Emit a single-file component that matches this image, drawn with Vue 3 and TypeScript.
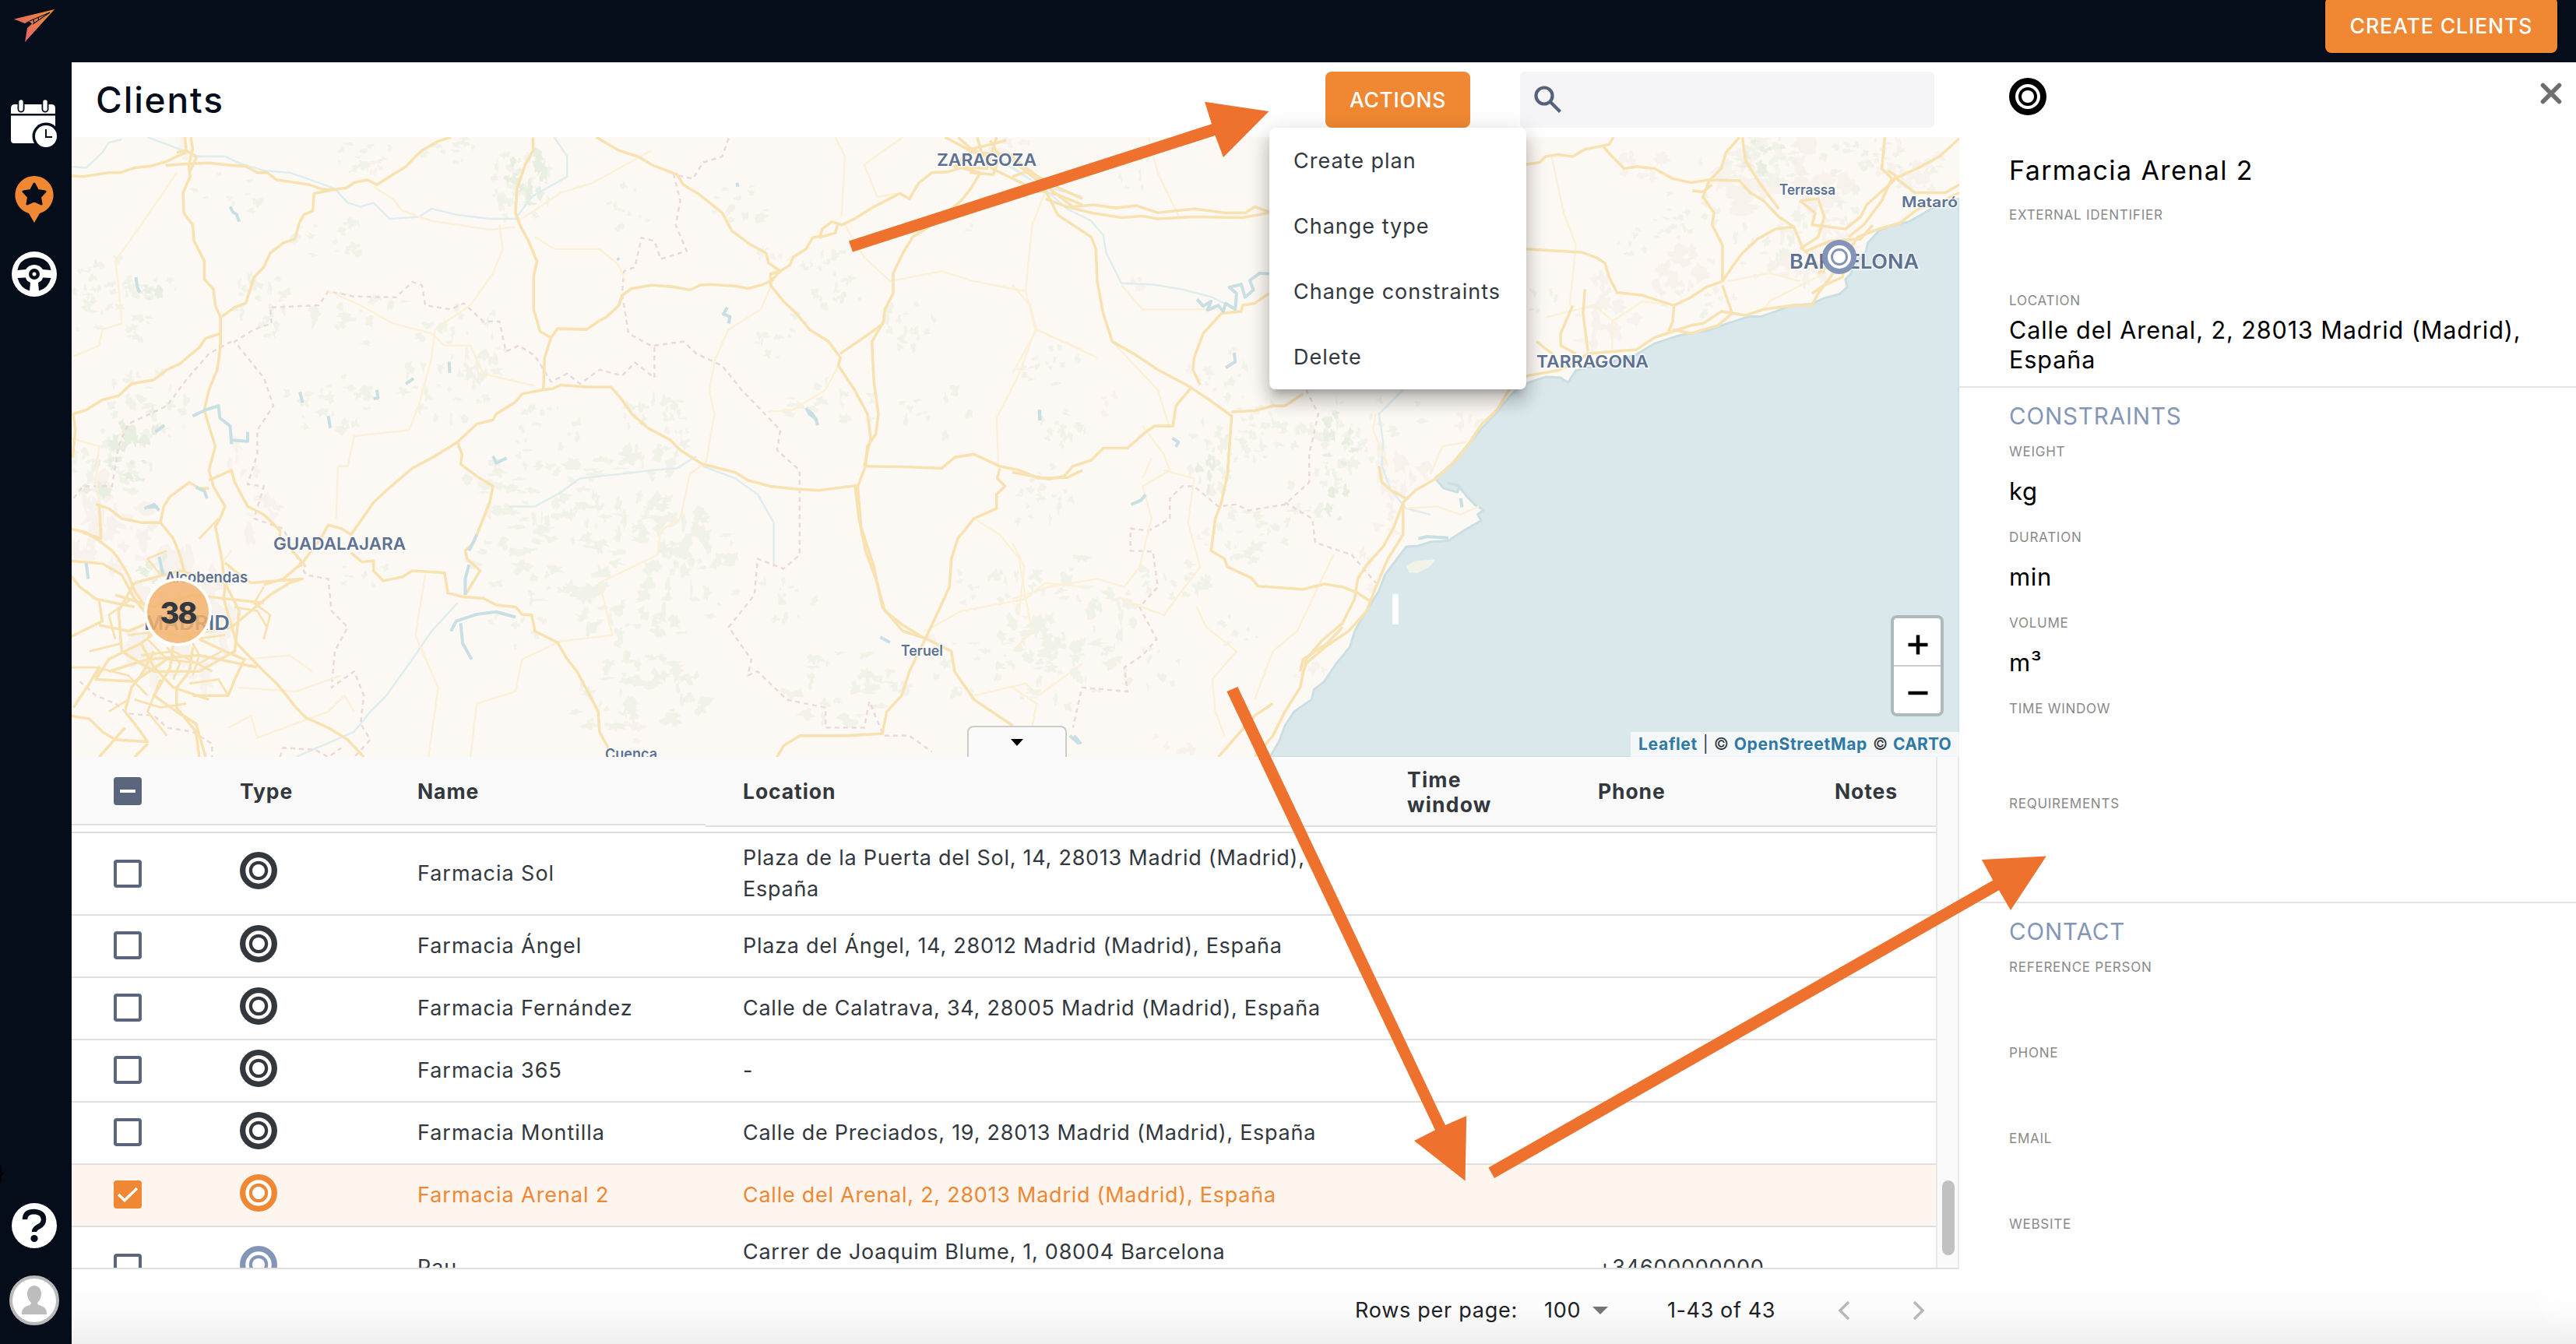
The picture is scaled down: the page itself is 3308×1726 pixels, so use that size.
<script setup lang="ts">
interface Client {
  name: string
  location: string
  phone?: string
  color: string
  selected?: boolean
  tall?: boolean
}

const clients: Client[] = [
  { name: 'Farmacia Sol', location: 'Plaza de la Puerta del Sol, 14, 28013 Madrid (Madrid), España', color: '#33383f', tall: true },
  { name: 'Farmacia Ángel', location: 'Plaza del Ángel, 14, 28012 Madrid (Madrid), España', color: '#33383f' },
  { name: 'Farmacia Fernández', location: 'Calle de Calatrava, 34, 28005 Madrid (Madrid), España', color: '#33383f' },
  { name: 'Farmacia 365', location: '-', color: '#33383f' },
  { name: 'Farmacia Montilla', location: 'Calle de Preciados, 19, 28013 Madrid (Madrid), España', color: '#33383f' },
  { name: 'Farmacia Arenal 2', location: 'Calle del Arenal, 2, 28013 Madrid (Madrid), España', color: '#f08833', selected: true },
  { name: 'Pau', location: 'Carrer de Joaquim Blume, 1, 08004 Barcelona\n\u00a0', phone: '+34600000000', color: '#8496b8', tall: true },
]

const menu = ['Create plan', 'Change type', 'Change constraints', 'Delete']
const constraints = [
  { label: 'WEIGHT', value: 'kg' },
  { label: 'DURATION', value: 'min' },
  { label: 'VOLUME', value: 'm³' },
  { label: 'TIME WINDOW', value: '' },
  { label: 'REQUIREMENTS', value: '' },
]
const contact = ['REFERENCE PERSON', 'PHONE', 'EMAIL', 'WEBSITE']

const toPath = (s: string) => 'M' + s.replace(/\s*M\s*/g, ' M')

/* Map is drawn as a west sheet and an east sheet, each in its own units. */
const westMajor = [
  '0 108 20 110 60 100 78 100 100 88 125 84 150 72 165 60 180 50 178 12',
  '148 82 185 78 215 76 250 82 272 84 290 100 305 100 320 118 345 124 370 130 392 142 410 142 428 138 440 125 460 118 475 130 500 105 520 85 535 60 545 45 570 22 590 12',
  '187 12 190 40 184 80 186 110 175 150 176 200 190 230 192 270 208 320 208 365 222 390 225 430 233 460 233 530 228 590 215 640 208 690 216 735 225 780 215 840 222 880 240 930 232 960 225 980 235 1060',
  '165 50 180 45 196 62 186 95',
  '410 142 378 152 376 195 362 205 355 225 348 265 330 275 310 300 300 335 285 360 280 385 272 425 255 435 235 458',
  '233 500 210 512 200 535 170 575 150 590 130 615 95 625 75 655 50 665 25 690 5 700 8 740 4 808',
  '717 12 717 45 705 80 692 140 690 200 698 235 710 270 723 320 718 360 718 440 728 495 745 510 735 560 733 640',
  '745 510 755 488 800 490 820 468 830 460 850 430 855 405 870 388 900 380 935 384 960 392 975 380 990 378 1030 382 1050 388 1070 380 1085 370 1100 345',
  '815 12 850 45 880 60 900 80 940 105 950 130 975 155 1010 200 1025 245 1055 280 1078 300 1082 325 1100 345 1085 352 1085 380 1105 420 1125 450 1145 490 1175 520 1193 560 1190 580 1215 640 1235 700 1240 760 1230 830',
  '1100 345 1115 330 1120 310 1140 290 1150 262 1162 258 1165 240 1180 222 1195 230 1215 215 1245 185 1285 152 1300 165 1315 125 1335 100 1360 98 1380 88 1410 100',
  '1160 262 1185 250 1190 225',
  '1410 100 1395 140 1380 170 1350 210 1330 235 1305 260 1290 300 1275 350 1275 400 1262 440 1260 470 1242 520 1245 620 1252 700 1248 750 1235 780 1232 830 1220 880 1225 980 1245 1080 1258 1180 1290 1240 1325 1258',
  '1193 550 1225 515 1260 475',
  '1216 880 1222 960 1232 1040 1248 1110 1262 1190 1290 1225 1320 1255',
  '733 640 700 650 690 670 660 700 655 715 630 725 600 770 565 805 530 835 490 890 470 920 455 955 435 1000 420 985 400 976 390 1005 360 1070 330 1110 300 1125',
  '733 640 748 637 760 628 800 633 838 633 855 665 870 700 895 735 930 765 945 790 980 825 1030 845 1050 865 1085 880 1120 886 1160 890 1218 878',
  '600 770 607 800 605 825 630 855 655 880 650 920 640 960 625 1020 612 1040 615 1060 635 1090 612 1150',
  '435 1045 452 1068 470 1065 470 1090 485 1115 515 1105 530 1090 580 1095 585 1145 610 1155 640 1158 660 1175 690 1180 700 1198 715 1200 720 1240 755 1268 770 1310 785 1340 805 1400 818 1440 820 1490 835 1535',
  '1230 830 1300 832 1350 835 1370 808 1400 800 1440 830 1470 840 1500 860 1545 858 1568 840',
  '1440 835 1436 860 1448 880 1435 900 1435 935 1400 960 1375 1010 1365 1060 1362 1130 1345 1190 1325 1258 1365 1290 1370 1340 1400 1410 1460 1475',
  '1325 1258 1300 1340 1288 1400 1265 1440 1258 1495 1200 1500 1130 1500 1105 1525 1095 1553',
  '1375 12 1395 40 1420 62 1428 90 1460 115 1500 145 1530 155 1568 180',
  '1355 12 1400 50 1455 55 1490 100 1520 130 1568 165',
  '1435 12 1420 90 1370 85 1400 40 1450 20',
  '1405 12 1412 50 1395 100 1430 105 1440 60 1425 20',
  '0 985 25 995 45 1015 65 1040 75 1060 90 1100 100 1140 125 1200',
  '40 925 60 935 80 960 110 970 140 970 160 1010 170 1050 180 1110',
  '45 925 48 1010 20 995',
  '140 970 145 930 155 905 185 870 200 885 215 885',
  '215 865 250 840 255 870 275 930 300 950 325 990 325 1010 350 1050 365 1080',
  '235 1060 240 1130 238 1160 245 1200 258 1270 300 1340 320 1370 350 1430 365 1455 400 1480 430 1510 455 1553',
  '0 1065 50 1072 80 1100 100 1160 120 1200',
  '0 1100 15 1130 40 1160 100 1180',
  '45 1165 50 1215 0 1255 M45 1225 90 1240 120 1220',
  '40 1360 60 1310 110 1270 150 1220',
  '5 1430 30 1370 45 1330 40 1360 100 1365 150 1310',
  '0 1450 30 1458 50 1490 70 1510 120 1515 100 1470 85 1440 95 1380 110 1350 130 1290',
  '160 1270 155 1330 130 1400 165 1440 195 1470 210 1553',
  '190 1280 185 1340 165 1380 165 1430 195 1490 200 1553',
  '200 1260 240 1290 270 1310 255 1360 245 1400 190 1400',
  '180 1250 250 1230 280 1190 310 1150 340 1120 360 1110 280 1120 255 1090 240 1070',
  '120 1520 100 1553 M85 1480 45 1553',
  '100 1120 170 1090 240 1120 262 1190 255 1290 200 1340 130 1340 80 1290 75 1190 100 1120',
  '70 1150 130 1180 190 1150 245 1160 300 1170',
  '110 1270 130 1330 160 1380 215 1410',
  '60 1340 120 1310 200 1300 290 1330',
]
const westStreets = [
  '90 1250 140 1240 190 1260 240 1250 M130 1200 120 1260 150 1310 200 1320 235 1290 M150 1280 170 1320 160 1360 M110 1300 160 1290 220 1340 M180 1240 200 1300 190 1350',
  '0 1330 40 1330 90 1350 120 1400 M30 1290 80 1270 M300 1130 285 1170 310 1200 300 1260 M255 1180 290 1190 305 1230 M95 1160 60 1200 70 1260 M185 1370 230 1360 245 1400 M100 1410 140 1430 180 1420',
  '140 1360 120 1440 150 1500 M60 1440 90 1410 M230 960 200 1010 M150 1040 120 1060 140 1100',
]
const westMinor = [
  '165 100 140 160 110 230 70 320 75 380 80 475 50 490 45 530 0 560',
  '470 135 500 165 515 195 560 220 650 242 690 235',
  '700 215 760 150 810 125 850 90 900 45',
  '665 230 670 290 655 350 620 430 565 490 560 560 540 680 525 740 440 755 430 830 415 830 412 960',
  '400 395 450 430 500 475 560 500 580 530 620 530 640 600 720 630',
  '720 260 750 290 820 290 850 330 860 370',
  '1185 12 1200 60 1195 210',
  '1290 12 1230 80 1250 160 1290 150',
  '1090 365 1070 440 1020 490 1000 560 990 640 998 700 985 820 960 850 945 960 915 990 910 1050 820 1120 840 1250 760 1265 700 1310 690 1390 630 1420 620 1553',
  '1190 580 1170 640 1120 690 1080 695',
  '1200 230 1230 310 1270 370 1350 345 1400 370 1480 395 1495 490 1568 540',
  '1495 490 1470 600 1435 710 1438 830',
  '1480 395 1490 230 1510 150',
  '1400 960 1440 1000 1470 1060 1480 1160 1510 1120 1568 1130',
  '1325 1240 1380 1190 1480 1160 1490 1240 1460 1290',
  '1400 1400 1440 1385 1480 1370 1500 1400 1568 1320',
  '555 1553 570 1380 535 1250 550 1100',
  '0 760 45 780 40 860 45 925',
  '250 1040 235 1070 M245 1480 280 1450 290 1505 400 1440 425 1400 440 1440',
  '270 1310 340 1300 375 1340 M260 1380 350 1390 420 1350',
]
const westBorders = [
  '1020 15 1010 60 980 75 965 115 935 105 945 170 938 230 955 295 915 315 905 270 885 262 875 335 858 345 855 400 865 500 905 535 905 610 875 572 855 605 820 590 790 625 770 600 745 620 720 555 695 530 675 545 665 470 640 470 610 425 590 440 550 430 545 380 530 372 505 410 440 408 400 395 385 430 310 435 312 475 285 490 255 520 300 610 315 680 290 740 290 800 275 875 300 880 285 960 330 985 365 1100 400 1110 405 1190 430 1230 410 1290 405 1380 440 1340 455 1400 450 1470 465 1510 440 1553',
  '905 530 950 520 970 550 1010 580 1040 640 1100 740 1095 790 1130 840 1130 1050 1105 1085 1065 1060 1060 1150 1020 1230 1055 1310 1050 1350 1065 1340 1110 1410 1170 1430 1170 1480 1230 1480 1238 1415 1260 1500 1300 1500 1335 1540',
  '250 520 215 550 180 615 150 680 90 725 75 780 65 880 20 880 0 920',
  '15 1365 40 1400 70 1420 90 1445 130 1450 150 1480 190 1490 220 1520 220 1553',
  '325 1553 330 1530 380 1535 400 1553 420 1530',
]
const westRivers = [
  '0 85 25 88 50 50 60 25 80 18',
  '120 12 150 30 200 60 240 60 260 75 300 95 340 100 385 125 410 140 430 175 450 185 470 175 495 215 540 210 560 190 600 205 650 215 690 215 715 160 770 110 770 60 750 12',
  '680 930 720 930 760 895 790 860 850 850 900 840 940 835 970 805',
  '980 830 1030 860 1065 900 1090 970 1090 1080',
  '600 1170 560 1240 530 1310 490 1400 465 1440 440 1490 350 1553',
  '1430 50 1455 85 1500 130 1568 160',
]
const westLakes = [
  '248 185 252 198 258 204 262 222', '102 360 104 385 108 398', '475 640 477 660 470 662', '356 645 360 672',
  '520 625 532 612', '587 570 588 598', '400 705 403 735', '190 705 210 690 230 680 232 710 248 730 250 775 M250 765 275 768 275 745',
  '132 745 146 728', '1140 685 1145 700 1155 712 1158 728', '1142 690 1150 700 1156 716', '1018 435 1012 452 1022 458 1020 475', '1033 125 1034 135',
  '1501 690 1502 716', '115 935 130 925 138 940', '120 932 136 930', '195 882 208 892 212 910', '612 1150 612 1110 618 1075 M618 1040 630 1000',
  '590 1240 598 1215 630 1198 660 1192 690 1205 M605 1220 608 1270 622 1310', '25 1070 28 1110', '138 1055 144 1100',
  '655 805 660 822 676 810', '1255 1255 1270 1268', '848 312 850 318', '1555 1500 1566 1520',
]
const eastMajor = [
  '0 110 30 95 70 150 100 185 135 180 170 188 205 182 240 200 300 190 350 200 385 200 400 185 424 198',
  '55 165 90 185 130 200 180 212 215 208 240 215 300 210 380 212 424 200',
  '0 70 50 130 75 205 130 260 138 290 140 370 150 450 165 520 200 550 240 590 290 630 325 665 362 705 355 850 345 920 335 960 328 1040 350 1060 355 1080 395 1108 405 1128 480 1136 515 1123 545 1130 570 1145 590 1165',
  '424 400 400 425 380 430 378 445 345 450 315 500 300 560 298 590 310 628',
  '362 695 400 692 430 680 450 680 480 650',
  '0 845 60 862 85 855 100 830 130 815 150 785 190 785 220 745 235 730 265 730 270 680 295 635',
  '848 80 870 75 880 60 900 55 925 60 945 42 970 35 985 30 992 12',
  '975 35 990 60 1010 90 1030 85 1060 90 1090 115 1120 125 1150 118 1200 120 1218 150 1240 170 1265 210 1290 235 1305 290 1325 320 1340 350',
  '1150 120 1170 90 1178 50 1200 12',
  '1205 12 1210 70 1235 130 1265 190 M1122 145 1140 148 1155 130',
  '1150 120 1140 160 1158 200 1155 230 1172 280 1172 370 1145 385 1120 410 1092 430 1090 470 1083 495',
  '848 290 900 295 940 298 965 312 978 325 985 360 998 398 1040 405 1060 415 1092 430',
  '1172 370 1190 330 1205 300 1230 265 1260 240 1290 235',
  '1563 150 1530 175 1495 190 1465 225 1430 240 1395 260 1375 310 1345 370 1330 400 1320 430 1290 430 1240 440 1210 455 1170 445 1140 475 1120 480 1090 495 1060 510 1030 540 990 545 950 550 930 570 900 592 850 605 820 640 800 690 775 725 755 770 735 810 700 860 665 890 645 920 630 980 612 1030 585 1075 570 1110 565 1160 545 1220 510 1265 485 1310 475 1380 450 1440 430 1500 400 1553',
  '645 920 645 1000 620 1060 600 1130 585 1190 555 1240 520 1275 485 1320 478 1350',
  '925 430 905 500 905 530 930 550 M945 390 942 450 950 545 M865 520 895 555',
  '1172 380 1188 450 1165 480 1120 500 1090 490',
  '1563 15 1530 60 1500 85 1450 120 1435 170 1405 230 1380 260',
  '1440 12 1435 90 1455 120 1410 180 1400 210 1375 240 1320 230 1325 200 1300 170',
  '1300 170 1330 165 1340 210 1330 260 1300 290',
  '1310 295 1350 270 1400 265 1420 230',
  '1455 110 1490 150 1540 150 1563 130 M1445 95 1460 110',
  '1320 400 1340 380 1370 360 1375 330 M1330 350 1360 320 1365 290',
  '605 830 610 870 625 890 650 910 M340 1553 365 1510 400 1450 430 1420',
  '545 1230 520 1270 480 1310 475 1340',
]
const eastMinor = [
  '225 12 240 100 275 210 M0 380 30 430 40 490 0 600',
  '40 490 140 560 M165 520 240 640 260 735 M0 1020 20 1080 10 1200',
  '890 60 910 200 930 280 920 430',
  '215 730 250 800 260 840 215 880 230 960 210 1080 185 1130 140 1110 60 1130 0 1160',
  '530 1050 470 1240 430 1290 400 1410',
  '250 840 300 860 290 970 310 1080 250 1200 180 1160',
  '304 1180 320 1230 370 1290 330 1360 335 1440 350 1500',
  '180 380 215 440 340 440 M650 935 700 930 740 950 770 930',
  '600 700 595 740 620 830 M750 770 710 780 690 850',
  '1000 480 960 430 880 460 M1092 430 1040 420 990 470 990 540',
  '1180 370 1250 350 1300 370 M1340 350 1250 420 1240 440',
  '0 1380 40 1420 30 1500 M230 810 215 860',
]
const eastBorders = [
  '485 640 505 700 490 800 490 870 450 925 390 940 370 925 340 930 300 880 280 880 260 910 260 960 225 990 195 985 195 1040 232 1042 240 1130 210 1180 238 1260 215 1300 185 1330 190 1390 115 1380 100 1480',
  '450 920 495 960 500 1020 560 1050 600 1120',
]
const eastRivers = [
  '0 85 60 150 90 190 130 220 150 255 155 300 180 375 230 378 280 390 330 410 350 425',
  '645 640 605 700 612 770 610 830 625 890 650 935 690 950',
]
const eastLakes = [
  '305 415 315 432 328 420 322 442 340 430 348 446 352 425 368 440 370 400 358 385 378 378 384 410 398 392 392 368 408 350 424 352',
  '352 585 368 570 366 548', '264 760 274 770 270 782', '196 925 212 915 220 900', '45 690 46 716', '740 910 742 932',
  '670 1010 685 1005 720 1008', '95 1500 110 1520',
]

/* Deterministic scatter of irregular patches used for woodland and built-up areas. */
let seed = 7
const rnd = () => {
  seed = (seed * 16807) % 2147483647
  return seed / 2147483647
}
function scatter(clusters: number[][], grain = 1): string {
  let d = ''
  for (const [cx, cy, rx, ry, n] of clusters) {
    for (let i = 0; i < n / grain; i++) {
      const a = rnd() * Math.PI * 2
      const r = Math.sqrt(rnd())
      const x = cx + Math.cos(a) * rx * r
      const y = cy + Math.sin(a) * ry * r
      const w = (4 + rnd() * rx * 0.22) * grain
      const h = (6 + rnd() * ry * 0.28) * grain
      const pts: string[] = []
      for (let k = 0; k < 13; k++) {
        const t = (k / 13) * Math.PI * 2
        const q = 0.3 + rnd() * 0.95
        pts.push(`${(x + Math.cos(t) * w * q).toFixed(1)} ${(y + Math.sin(t) * h * q).toFixed(1)}`)
      }
      d += 'M' + pts.join('L') + 'Z'
    }
  }
  return d
}
const westUrban = scatter([[60, 980, 70, 110, 26], [180, 1220, 90, 170, 40], [300, 960, 30, 70, 10], [470, 100, 20, 25, 5], [1090, 320, 26, 35, 7], [660, 930, 16, 40, 5], [870, 1500, 30, 30, 5], [1450, 50, 40, 40, 6], [185, 40, 20, 35, 6], [1330, 1270, 20, 25, 4], [270, 810, 25, 60, 6]])
const westWood = scatter([[460, 60, 50, 45, 9], [590, 40, 50, 40, 8], [700, 130, 45, 95, 26], [400, 260, 60, 60, 9], [60, 380, 60, 70, 16], [130, 390, 40, 35, 8], [300, 420, 50, 90, 16], [460, 470, 100, 80, 14], [60, 480, 70, 50, 9], [630, 520, 60, 100, 12], [860, 190, 40, 60, 6], [1040, 180, 55, 50, 10], [1180, 370, 55, 80, 14], [1300, 470, 45, 80, 12], [1100, 500, 50, 60, 8], [120, 680, 70, 90, 18], [60, 830, 70, 90, 24], [400, 660, 70, 90, 14], [580, 640, 70, 90, 16], [740, 740, 60, 60, 9], [910, 740, 60, 90, 22], [720, 880, 110, 80, 20], [870, 930, 120, 130, 34], [740, 1060, 120, 110, 26], [960, 1080, 90, 130, 26], [870, 1230, 80, 100, 20], [880, 1400, 110, 100, 26], [1180, 680, 70, 70, 10], [1340, 700, 60, 70, 7], [1520, 580, 50, 50, 5], [1110, 1150, 50, 80, 8], [1200, 1380, 100, 90, 20], [1420, 1130, 50, 80, 9], [1390, 1330, 60, 70, 8], [1500, 1280, 60, 90, 12], [1540, 720, 40, 60, 5], [240, 160, 60, 70, 6], [460, 1110, 70, 40, 4], [1460, 930, 40, 60, 3], [700, 1220, 50, 60, 5], [1390, 210, 30, 40, 3]], 0.62)
const westDense = scatter([[705, 110, 30, 80, 16], [100, 740, 35, 90, 12], [60, 850, 50, 50, 10], [130, 1085, 24, 36, 8], [125, 395, 22, 20, 6]])
const eastUrban = scatter([[1250, 110, 130, 90, 34], [1040, 80, 40, 60, 8], [970, 450, 60, 110, 16], [1130, 380, 70, 90, 16], [1320, 300, 70, 110, 24], [640, 830, 45, 80, 14], [760, 700, 30, 60, 7], [620, 960, 25, 60, 7], [590, 1090, 25, 60, 6], [490, 1320, 30, 50, 6], [270, 1520, 40, 30, 5], [205, 380, 14, 25, 4], [155, 670, 18, 30, 4], [300, 600, 16, 25, 3], [315, 1010, 16, 35, 4], [1480, 80, 60, 60, 12]])
const eastWood = scatter([[200, 90, 30, 60, 4], [60, 560, 40, 40, 5], [90, 740, 30, 50, 5], [340, 800, 50, 100, 18], [540, 760, 50, 90, 20], [430, 750, 60, 80, 14], [500, 900, 50, 70, 14], [400, 1000, 70, 70, 16], [60, 900, 60, 70, 9], [100, 1180, 110, 130, 26], [270, 1110, 60, 70, 12], [80, 1330, 100, 100, 16], [220, 1330, 60, 70, 7], [350, 600, 50, 80, 7], [400, 700, 40, 50, 8], [1110, 210, 60, 70, 12], [1240, 70, 80, 60, 18], [1400, 60, 70, 50, 14], [1340, 180, 60, 70, 12], [1030, 260, 40, 50, 5], [880, 420, 30, 40, 4], [1230, 300, 60, 80, 10], [1110, 430, 50, 50, 7], [380, 1220, 50, 60, 4], [1500, 110, 50, 50, 9], [600, 780, 20, 40, 3], [640, 700, 50, 50, 5]], 0.62)
const eastDense = scatter([[540, 760, 30, 80, 10], [320, 850, 20, 60, 7], [1240, 60, 50, 40, 8], [530, 920, 26, 50, 6]])

const sea = 'M1563 165L1530 178 1500 205 1480 222 1450 232 1430 245 1412 275 1408 300 1388 325 1385 350 1375 365 1378 385 1365 402 1340 412 1318 427 1285 430 1260 445 1235 458 1215 458 1180 475 1150 492 1100 505 1060 525 1030 552 980 575 930 592 917 622 905 610 880 608 860 618 838 630 820 658 800 695 775 735 750 780 725 825 698 860 712 885 735 895 738 880 720 872 735 876 750 905 765 928 778 938 768 950 774 965 745 990 720 1015 690 1018 670 1028 650 1030 635 1060 615 1100 605 1140 580 1200 565 1240 557 1280 535 1320 515 1365 498 1385 494 1410 465 1440 450 1475 440 1515 425 1553 1563 1553Z'

const labels = [
  { t: 'ZARAGOZA', x: 1203, y: 213, w: 128, s: 22 },
  { t: 'GUADALAJARA', x: 351, y: 706, w: 170, s: 22 },
  { t: 'Alcobendas', x: 212, y: 748, w: 106, s: 19 },
  { t: 'MADRID', x: 185, y: 809, w: 110, s: 25 },
  { t: 'Teruel', x: 1157, y: 842, w: 54, s: 18 },
  { t: 'Cuenca', x: 777, y: 975, w: 67, s: 19 },
  { t: 'Terrassa', x: 2285, y: 250, w: 72, s: 18 },
  { t: 'Mataró', x: 2442, y: 266, w: 72, s: 18 },
  { t: 'BARCELONA', x: 2298, y: 345, w: 166, s: 25 },
  { t: 'TARRAGONA', x: 1973, y: 472, w: 144, s: 22 },
]
</script>

<template>
  <div class="app">
    <nav class="side">
      <svg class="logo" viewBox="0 0 52 42">
        <defs>
          <linearGradient id="logo-fill" x1="0" y1="0.7" x2="1" y2="0">
            <stop offset="0" stop-color="#e2626a" />
            <stop offset="1" stop-color="#f39032" />
          </linearGradient>
        </defs>
        <path fill="url(#logo-fill)" d="M52 0L0 12.500L14 18L19 15L23 18.500L17 24L14 42Z" />
        <path d="M46 4L20 15M46 4L24 19M31 10.500L31.500 14M25 13L25.500 17" stroke="#050c1a" stroke-width="1.200" fill="none" />
      </svg>
      <svg class="nav-icon calendar" viewBox="0 0 60 62">
        <path fill="#fff" d="M5 6H52Q57 6 57 11V18H0V11Q0 6 5 6ZM0 20.500H57V56H4Q0 56 0 52Z" />
        <path d="M13 4V12M44 4V12" stroke="#050c1a" stroke-width="9" stroke-linecap="round" />
        <path d="M13 3V12M44 3V12" stroke="#fff" stroke-width="5.400" stroke-linecap="round" />
        <circle cx="45" cy="47" r="17.500" fill="#050c1a" />
        <circle cx="45" cy="47" r="14" fill="#fff" />
        <path d="M45 38V48H53" stroke="#050c1a" stroke-width="2" fill="none" />
      </svg>
      <svg class="nav-icon pin" viewBox="0 0 50 60">
        <path fill="#f08833" d="M25 0A24.500 24.500 0 0 1 32 48L25 60L18 48A24.500 24.500 0 0 1 25 0Z" />
        <path fill="#050c1a" stroke="#050c1a" stroke-width="3" stroke-linejoin="round" d="M25 10L29.500 18.500L39 20L32.500 27L34 36L25 32L16 36L17.500 27L11 20L20.500 18.500Z" />
      </svg>
      <svg class="nav-icon wheel" viewBox="0 0 58 58">
        <circle cx="29" cy="29" r="29" fill="#fff" />
        <path fill="#050c1a" d="M7.500 24Q10 8 29 7.500Q48 8 50.500 24L40 23Q36 17 29 17Q22 17 18 23ZM7.500 34L18 33.500Q19 38 24 40L23 50.500Q11 47 7.500 34ZM50.500 34L40 33.500Q39 38 34 40L35 50.500Q47 47 50.500 34Z" />
        <circle cx="29" cy="29" r="7" fill="#050c1a" />
        <circle cx="29" cy="29" r="2.500" fill="#fff" />
      </svg>
      <span class="stray">}</span>
      <svg class="help" viewBox="0 0 58 58">
        <circle cx="29" cy="29" r="29" fill="#fff" />
        <path d="M17 21Q17 11 29 11Q41 12 41 21Q41 27 35 30Q29 33 29 37" stroke="#050c1a" stroke-width="6.500" fill="none" />
        <circle cx="29" cy="45.500" r="4.600" fill="#050c1a" />
      </svg>
      <svg class="avatar" viewBox="0 0 64 64">
        <circle cx="32" cy="32" r="30" fill="#fff" stroke="#b9b9b9" stroke-width="4" />
        <path fill="#bdbdbd" d="M32 13C38 13 41 18 41 24C41 29 38 33 36 35C36 38 39 38 43 40C47 42 48 45 48 50H16C16 45 17 42 21 40C25 38 28 38 28 35C26 33 23 29 23 24C23 18 26 13 32 13Z" />
      </svg>
    </nav>

    <div class="shell">
      <header class="topbar"><button class="btn create">CREATE CLIENTS</button></header>
      <div class="content">
        <main class="main">
          <div class="head">
            <h1>Clients</h1>
            <div class="actions-wrap">
              <button class="btn actions">ACTIONS</button>
              <ul class="menu">
                <li v-for="m in menu" :key="m">{{ m }}</li>
              </ul>
            </div>
            <div class="search">
              <svg viewBox="0 0 36 36"><circle cx="13" cy="13" r="10.500" /><path d="M21 21L33.500 33.500" /></svg>
            </div>
          </div>

          <section class="map">
            <svg class="tiles" viewBox="0 0 2424 796">
              <rect width="2424" height="796" fill="#fcf9f4" />
              <g transform="translate(-2 -6) scale(.82908 .51658)">
                <path :d="westUrban" fill="#f7f2eb" />
                <path :d="westWood" fill="#f1f3e8" />
                <path :d="westDense" fill="#e9efe0" />
                <path v-for="(p, i) in westRivers" :key="'r' + i" class="river" :d="toPath(p)" />
                <path v-for="(p, i) in westBorders" :key="'b' + i" class="border" :d="toPath(p)" />
                <path v-for="(p, i) in westMinor" :key="'n' + i" class="minor" :d="toPath(p)" />
                <path v-for="(p, i) in westStreets" :key="'s' + i" class="major street" :d="toPath(p)" />
                <path v-for="(p, i) in westMajor" :key="'m' + i" class="major" :d="toPath(p)" />
                <path v-for="(p, i) in westLakes" :key="'l' + i" class="lake" :d="toPath(p)" />
              </g>
              <g transform="translate(1208 -6) scale(.77806 .51658)">
                <path :d="eastUrban" fill="#f7f2eb" />
                <path :d="eastWood" fill="#f1f3e8" />
                <path :d="eastDense" fill="#e9efe0" />
                <path :d="sea" fill="#dae8eb" stroke="#cbdfe3" stroke-width="3" vector-effect="non-scaling-stroke" />
                <path d="M650 1078L665 1065 698 1062 690 1078 670 1095 655 1094Z" fill="#f1f3e8" />
                <path v-for="(p, i) in eastRivers" :key="'r' + i" class="river" :d="toPath(p)" />
                <path v-for="(p, i) in eastBorders" :key="'b' + i" class="border" :d="toPath(p)" />
                <path v-for="(p, i) in eastMinor" :key="'n' + i" class="minor" :d="toPath(p)" />
                <path v-for="(p, i) in eastMajor" :key="'m' + i" class="major" :d="toPath(p)" />
                <path v-for="(p, i) in eastLakes" :key="'l' + i" class="lake" :d="toPath(p)" />
              </g>
              <g transform="translate(-92 -176)">
                <text v-for="l in labels" :key="l.t" class="city" :x="l.x" :y="l.y" :font-size="l.s" :textLength="l.w" lengthAdjust="spacingAndGlyphs">{{ l.t }}</text>
                <rect x="1788" y="763" width="8" height="39" fill="#fff" />
                <circle cx="2362" cy="330" r="22" fill="#8494b8" />
                <circle cx="2362" cy="330" r="13" fill="none" stroke="#fff" stroke-width="4" />
                <circle cx="2362" cy="330" r="8" fill="#fff" />
              </g>
            </svg>
            <div class="cluster">38</div>
            <div class="zoom">
              <span><svg viewBox="0 0 26 26"><path d="M0.500 13H25.500M13 0.500V25.500" /></svg></span>
              <span><svg viewBox="0 0 26 26"><path d="M0.500 13H25.500" /></svg></span>
            </div>
            <div class="attribution"><b>Leaflet</b><i>|</i><i>©</i><b>OpenStreetMap</b><i>©</i><b>CARTO</b></div>
            <div class="tab"><svg viewBox="0 0 16 9"><path d="M0 0H16L8 9Z" /></svg></div>
          </section>

          <section class="table-wrap">
            <div class="table">
              <div class="thead">
                <div class="th short check"><span class="box mixed"><i></i></span></div>
                <div class="th short">Type</div>
                <div class="th short">Name</div>
                <div class="th loc">Location</div>
                <div class="th two">Time<br />window</div>
                <div class="th">Phone</div>
                <div class="th">Notes</div>
              </div>
              <div v-for="c in clients" :key="c.name" class="row" :class="{ tall: c.tall, selected: c.selected }">
                <div class="check">
                  <span class="box" :class="{ on: c.selected }">
                    <svg v-if="c.selected" viewBox="0 0 28 20"><path d="M2 10L10 17.500L26 2" /></svg>
                  </span>
                </div>
                <div class="type">
                  <svg viewBox="0 0 48 48">
                    <circle cx="24" cy="24" r="24" :fill="c.color" />
                    <circle cx="24" cy="24" r="14.500" fill="none" stroke="#fff" stroke-width="4.500" />
                    <circle cx="24" cy="24" r="8" fill="#fff" />
                  </svg>
                </div>
                <div class="name">{{ c.name }}</div>
                <div class="loc">{{ c.location }}</div>
                <div></div>
                <div>{{ c.phone }}</div>
                <div></div>
              </div>
            </div>
            <div class="track"><div class="thumb"></div></div>
          </section>

          <footer class="pager">
            <span class="per">Rows per page:</span>
            <span class="size">100</span>
            <svg class="drop" viewBox="0 0 20 10"><path d="M0 0H20L10 10Z" fill="#757575" /></svg>
            <span class="range">1-43 of 43</span>
            <svg class="chev" viewBox="0 0 16 26"><path d="M14 2L3 13L14 24" /></svg>
            <svg class="chev next" viewBox="0 0 16 26"><path d="M2 2L13 13L2 24" /></svg>
          </footer>
        </main>

        <aside class="panel">
          <section class="summary">
            <div class="panel-head">
              <svg class="ring" viewBox="0 0 48 48">
                <circle cx="24" cy="24" r="24" fill="#000" />
                <circle cx="24" cy="24" r="14" fill="none" stroke="#fff" stroke-width="4" />
                <circle cx="24" cy="24" r="8" fill="#fff" />
              </svg>
              <svg class="close" viewBox="0 0 28 28"><path d="M3.500 3.500L24.500 24.500M24.500 3.500L3.500 24.500" /></svg>
            </div>
            <h2>Farmacia Arenal 2</h2>
            <div class="field"><label>EXTERNAL IDENTIFIER</label></div>
            <div class="field"><label>LOCATION</label><p class="address">Calle del Arenal, 2, 28013 Madrid (Madrid), España</p></div>
          </section>
          <section class="limits">
            <h3>CONSTRAINTS</h3>
            <div v-for="f in constraints" :key="f.label" class="field" :class="{ roomy: f.label === 'TIME WINDOW' }">
              <label>{{ f.label }}</label>
              <p>{{ f.value }}</p>
            </div>
          </section>
          <section class="contact">
            <h3>CONTACT</h3>
            <div v-for="f in contact" :key="f" class="field"><label>{{ f }}</label></div>
          </section>
        </aside>
        <div class="fade"></div>
      </div>
    </div>

    <svg class="arrows" viewBox="0 0 3308 1726">
      <path d="M1090 309.500L1556 159.300L1547 130.700L1629.500 143L1571 202L1560.500 174L1095 323.400Z" />
      <path d="M1575.400 888L1843 1451.300L1816 1465L1881.600 1516.600L1883.200 1433L1856 1445L1589.400 882Z" />
      <path d="M1911.400 1499.400L2559.300 1130.600L2544.800 1104L2627.800 1099.600L2582 1169L2567 1143.300L1919 1513Z" />
    </svg>
  </div>
</template>

<style>
body { margin: 0; background: #fff; }
</style>

<style scoped>
* { box-sizing: border-box; }
.app { position: relative; display: flex; width: 3308px; height: 1726px; overflow: hidden; background: #fff; color: #33383f; font: 400 27px/40px Inter, "Liberation Sans", sans-serif; letter-spacing: .74px; }
svg { display: block; flex: none; }
h1, h2, h3, p, ul { margin: 0; padding: 0; font-weight: 400; }

.side { position: relative; flex: none; width: 92px; height: 1726px; background: #050c1a; display: flex; flex-direction: column; align-items: flex-start; }
.logo { width: 52px; height: 42px; margin: 12px 0 0 18px; }
.calendar { width: 60px; height: 62px; margin: 74px 0 0 14px; }
.pin { width: 50px; height: 60px; margin: 36px 0 0 19px; }
.wheel { width: 58px; height: 58px; margin: 37px 0 0 15px; }
.stray { position: absolute; left: -5px; top: 1487px; color: #000; }
.help { width: 58px; height: 58px; margin: auto 0 0 15px; }
.avatar { width: 64px; height: 64px; margin: 35px 0 24px 12px; }

.shell { flex: 1; min-width: 0; display: flex; flex-direction: column; }
.topbar { height: 80px; background: #050c1a; display: flex; justify-content: flex-end; align-items: flex-start; padding-right: 24px; }
.btn { border: 0; padding: 0; border-radius: 8px; height: 72px; background: #f08833; color: #fff; font: 500 26.500px/73px Inter, sans-serif; letter-spacing: .95px; text-align: center; flex: none; }
.create { width: 298px; margin-top: -4px; line-height: 74px; }
.content { position: relative; flex: 1; display: flex; min-height: 0; }
.main { width: 2424px; flex: none; display: flex; flex-direction: column; }

.head { height: 96px; display: flex; align-items: center; }
h1 { width: 1576px; padding-left: 31px; color: #050c1a; font: 500 46px/60px Inter, sans-serif; letter-spacing: 1.9px; }
.actions-wrap { position: relative; width: 186px; margin-left: 34px; }
.actions { width: 186px; display: block; letter-spacing: .7px; }
.menu { position: absolute; z-index: 5; left: -72px; top: 72px; width: 330px; list-style: none; background: #fff; border-radius: 8px; box-shadow: 0 10px 10px -6px rgba(0, 0, 0, .2), 0 16px 20px 2px rgba(0, 0, 0, .14), 0 6px 28px 4px rgba(0, 0, 0, .12); }
.menu li { height: 84px; padding-left: 31px; line-height: 86px; letter-spacing: 1px; }
.search { width: 532px; height: 72px; margin-left: 64px; padding: 18px; border-radius: 6px; background: #f5f5f8; }
.search svg { width: 36px; height: 36px; }
.search path, .search circle { fill: none; stroke: #56617b; stroke-width: 4.200; }

.map { position: relative; height: 796px; flex: none; overflow: hidden; }
.tiles { width: 2424px; height: 796px; }
.tiles path { stroke-linejoin: round; }
.major, .minor, .river, .border, .lake { fill: none; vector-effect: non-scaling-stroke; }
.major { stroke: #f9e2b2; stroke-width: 3.600; }
.street { stroke-width: 2.800; }
.minor { stroke: #fcf0d8; stroke-width: 2.500; }
.river { stroke: #e0edef; stroke-width: 2.500; }
.lake { stroke: #c8dfe4; stroke-width: 4; }
.border { stroke: #ecd9dc; stroke-width: 2.500; stroke-dasharray: 6 5; }
.city { font-family: Inter, sans-serif; font-weight: 600; letter-spacing: 0; fill: #5c7193; stroke: #fff; stroke-opacity: .7; stroke-width: 3px; paint-order: stroke; }
.cluster { position: absolute; left: 93px; top: 566px; width: 87px; height: 88px; border: 4px solid #fff; border-radius: 50%; background: rgba(243, 178, 108, .84); color: #33383f; font: 800 38px/82px Inter, sans-serif; letter-spacing: -2px; text-align: center; }
.zoom { position: absolute; left: 2336px; top: 614px; width: 68px; height: 130px; border: 4px solid rgba(0, 0, 0, .2); border-radius: 8px; background: #fff; background-clip: padding-box; }
.zoom span { display: flex; align-items: center; justify-content: center; height: 61px; padding-left: 1px; }
.zoom span:first-child { border-bottom: 2px solid #ccc; height: 62px; padding-top: 8px; }
.zoom span:last-child { padding-top: 8px; height: 60px; }
.zoom svg { width: 26px; height: 26px; }
.zoom path { stroke: #000; stroke-width: 4.500; }
.attribution { position: absolute; right: 0; bottom: 0; width: 422px; height: 32px; padding: 0 10px; display: flex; align-items: center; justify-content: space-between; background: rgba(255, 255, 255, .7); font-size: 21px; line-height: 32px; letter-spacing: .7px; }
.attribution b { color: #2f79a6; font-weight: 700; }
.attribution b:last-child { letter-spacing: .2px; }
.attribution i { font-style: normal; letter-spacing: 0; }
.tab { position: absolute; left: 1150px; bottom: 0; width: 128px; height: 40px; border: 2px solid #ccc; border-bottom: 0; border-radius: 8px 8px 0 0; background: #fafafa; display: flex; justify-content: center; padding-top: 15px; }
.tab svg { width: 16px; height: 9px; }

.table-wrap { height: 658px; flex: none; display: flex; border-bottom: 2px solid #e0e0e0; overflow: hidden; }
.table { width: 2394px; }
.thead, .row { display: grid; grid-template-columns: 216px 228px 370px 901px 245px 304px 130px; }
.thead { height: 98px; align-items: start; border-bottom: 2px solid #dfdfdf; }
.th { height: 90px; line-height: 88px; background: #fafafa; border-bottom: 2px solid #dfdfdf; font-size: 26.500px; font-weight: 700; letter-spacing: .9px; white-space: nowrap; }
.th.short { height: 88px; }
.th.two { padding-top: 13px; line-height: 32px; letter-spacing: 1.2px; }
.th.check { padding-top: 26px; }
.loc { padding-left: 48px; }
.row { height: 80px; align-items: center; border-bottom: 2px solid #dfdfdf; }
.row.tall { height: 106px; }
.row .loc { padding-right: 48px; white-space: pre-line; }
.row .name { letter-spacing: .95px; }
.row.selected { background: #fef5ee; color: #f08833; }
.check { padding-left: 54px; }
.row:not(.tall) .box { margin-bottom: 2px; }
.box { display: flex; align-items: center; justify-content: center; width: 36px; height: 36px; border: 4px solid #5b657d; border-radius: 4px; background: #fff; }
.box.mixed { background: #5b657d; }
.box.mixed i { width: 20px; height: 4px; background: #fff; }
.box.on { border-color: #f08833; background: #f08833; }
.box svg { width: 28px; height: 20px; }
.box path { fill: none; stroke: #fff; stroke-width: 3.500; }
.type svg { width: 48px; height: 48px; margin-bottom: 8px; }
.row:not(.tall) .type svg { margin-bottom: 6px; }
.track { width: 30px; border: solid #e8e8e8; border-width: 0 2px; background: #fafafa; padding: 544px 0 0 6px; }
.thumb { width: 16px; height: 96px; border-radius: 8px; background: #c1c1c1; }

.pager { flex: 1; position: relative; z-index: 2; display: flex; align-items: center; padding-top: 9px; color: #202124; white-space: nowrap; }
.per { margin-left: 1648px; width: 243px; }
.size { width: 62px; }
.drop { width: 20px; height: 10px; }
.range { margin-left: 76px; width: 219px; letter-spacing: .6px; }
.chev { width: 16px; height: 26px; }
.chev path { fill: none; stroke: #b8b8b8; stroke-width: 3.500; }
.next { margin-left: 80px; }

.panel { flex: 1; min-width: 0; background: #fff; color: #000; }
.panel section { padding-left: 64px; }
.summary { height: 418px; padding-top: 20px; border-bottom: 2px solid #e3e3e3; }
.panel-head { display: flex; justify-content: space-between; padding-right: 18px; }
.ring { width: 48px; height: 48px; }
.close { width: 28px; height: 28px; margin-top: 6px; }
.close path { stroke: #6e6e6e; stroke-width: 5.500; stroke-linecap: round; }
h2 { margin: 48px 0 24px; font-size: 34px; line-height: 45px; margin-bottom: 23px; letter-spacing: 1.4px; }
.field { height: 110px; }
.field.roomy { height: 122px; }
.field label { display: block; color: #8a8a8a; font-size: 17px; line-height: 24px; letter-spacing: .75px; }
.field p { padding-top: 19px; font-size: 31px; line-height: 40px; letter-spacing: .7px; }
.field .address { padding-top: 7px; width: 700px; font-size: 30.500px; line-height: 38px; letter-spacing: .93px; }
.limits { height: 662px; padding-top: 16px; border-bottom: 2px solid #e3e3e3; }
.contact { padding-top: 16px; }
h3 { margin-bottom: 14px; color: #8496b8; font-size: 29.500px; line-height: 40px; letter-spacing: .9px; }

.fade { position: absolute; left: 0; right: 0; bottom: 0; height: 84px; background: radial-gradient(circle at 100% 0, #fff 0, transparent 70px) right bottom / 70px 84px no-repeat, linear-gradient(to bottom, rgba(0, 0, 0, 0), rgba(0, 0, 0, .015) 50%, rgba(0, 0, 0, .062)); }
.arrows { position: absolute; z-index: 10; inset: 0; width: 3308px; height: 1726px; fill: #ee722e; pointer-events: none; }
</style>
